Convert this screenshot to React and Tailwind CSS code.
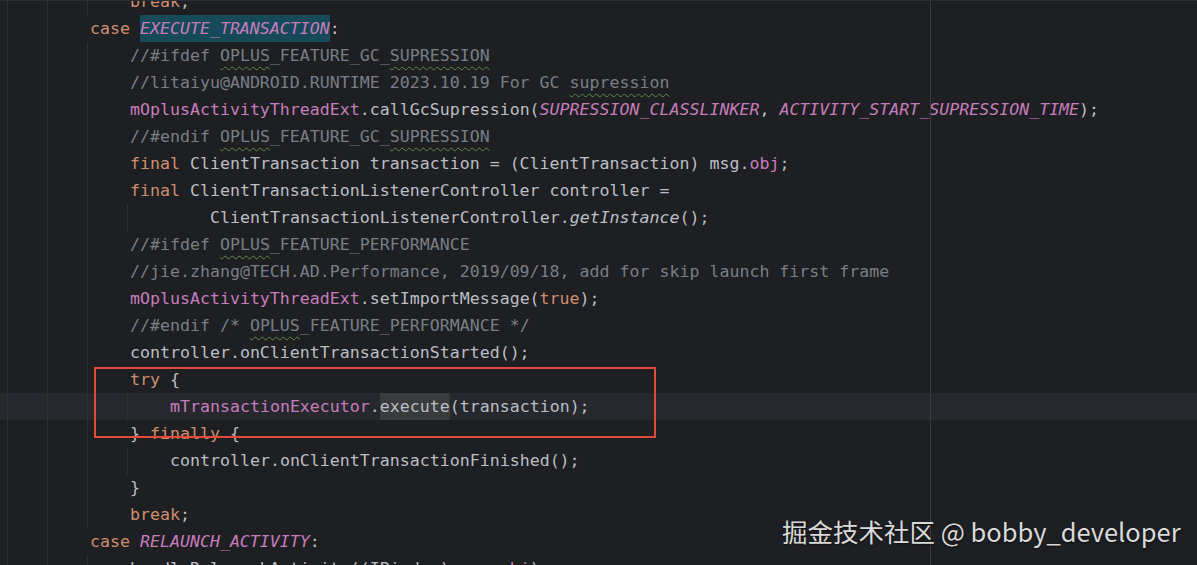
import React from "react";

// token colours (IntelliJ dark)
const K = "text-[#cf8e6d]";
const C = "text-[#7a7e85]";
const P = "text-[#c77dbb]";
const PI = "text-[#c77dbb] italic";
const D = "";
const I = "italic";
const U =
  "text-[#7a7e85] underline decoration-wavy decoration-[#5e8a4a] decoration-1 underline-offset-[5px]";

const lines = [
  { g: 3, t: [["break", K], [";", D]] },
  { g: 2, t: [["case", K], [" ", D], ["EXECUTE_TRANSACTION", PI + " bg-[#16495a]"], [":", D]] },
  { g: 3, t: [["//#ifdef ", C], ["OPLUS", U], ["_FEATURE_GC_", C], ["SUPRESSION", U]] },
  { g: 3, t: [["//litaiyu@ANDROID.RUNTIME 2023.10.19 For GC ", C], ["supression", U]] },
  {
    g: 3,
    t: [
      ["mOplusActivityThreadExt", P],
      [".callGcSupression(", D],
      ["SUPRESSION_CLASSLINKER", PI],
      [", ", D],
      ["ACTIVITY_START_SUPRESSION_TIME", PI],
      [");", D],
    ],
  },
  { g: 3, t: [["//#endif ", C], ["OPLUS", U], ["_FEATURE_GC_", C], ["SUPRESSION", U]] },
  {
    g: 3,
    t: [
      ["final", K],
      [" ClientTransaction transaction = (ClientTransaction) msg.", D],
      ["obj", P],
      [";", D],
    ],
  },
  { g: 3, t: [["final", K], [" ClientTransactionListenerController controller =", D]] },
  {
    g: 4,
    extra: 1,
    t: [["ClientTransactionListenerController.", D], ["getInstance", I], ["();", D]],
  },
  { g: 3, t: [["//#ifdef ", C], ["OPLUS", U], ["_FEATURE_PERFORMANCE", C]] },
  {
    g: 3,
    t: [["//jie.zhang@TECH.AD.Performance, 2019/09/18, add for skip launch first frame", C]],
  },
  {
    g: 3,
    t: [["mOplusActivityThreadExt", P], [".setImportMessage(", D], ["true", K], [");", D]],
  },
  { g: 3, t: [["//#endif /* ", C], ["OPLUS", U], ["_FEATURE_PERFORMANCE */", C]] },
  { g: 3, t: [["controller.onClientTransactionStarted();", D]] },
  { g: 3, t: [["try", K], [" {", D]] },
  {
    g: 4,
    cur: true,
    t: [["mTransactionExecutor", P], [".", D], ["execute", "bg-[#393b3c]"], ["(transaction);", D]],
  },
  { g: 3, t: [["} ", D], ["finally", K], [" {", D]] },
  { g: 4, t: [["controller.onClientTransactionFinished();", D]] },
  { g: 3, t: [["}", D]] },
  { g: 3, t: [["break", K], [";", D]] },
  { g: 2, t: [["case", K], [" ", D], ["RELAUNCH_ACTIVITY", PI], [":", D]] },
  { g: 3, t: [["handleRelaunchActivity((IBinder) msg.", D], ["obj", P], [");", D]] },
];

function CodeLine({ line }) {
  return (
    <div
      className={`flex h-[27px] pl-[7px] whitespace-pre ${
        line.cur ? "bg-[#26282e]" : ""
      }`}
    >
      {Array.from({ length: line.g }).map((_, i) => (
        <span key={i} className="w-[40px] shrink-0 border-l border-[#2f3034]" />
      ))}
      {line.extra && <span className="w-[40px] shrink-0" />}
      <span className="w-[3px] shrink-0" />
      {line.t.map(([text, cls], i) => (
        <span key={i} className={`leading-[27px] ${cls}`}>
          {text}
        </span>
      ))}
    </div>
  );
}

export default function App() {
  return (
    <div className="relative w-[1197px] h-[565px] overflow-hidden bg-[#1e1f22] border-t border-[#2b2d30]">
      {/* code */}
      <div
        className="-mt-[13px] text-[#bcbec4] text-[16.6px]"
        style={{ fontFamily: '"DejaVu Sans Mono", "Liberation Mono", monospace' }}
      >
        {lines.map((line, i) => (
          <CodeLine key={i} line={line} />
        ))}
      </div>

      {/* right margin guide */}
      <div className="absolute top-0 bottom-0 left-[930px] w-px bg-[#393b40]" />

      {/* red annotation box */}
      <div className="absolute left-[94px] top-[366px] w-[562px] h-[71px] border-2 border-[#e04b3a]" />

      {/* watermark */}
      <div
        className="absolute left-[782px] top-[513px] text-[25.5px] leading-[34px] text-[#dadada] [text-shadow:0_1px_2px_rgba(0,0,0,0.6)]"
        style={{ fontFamily: '"Noto Sans CJK SC", "Noto Sans", sans-serif' }}
      >
        掘金技术社区 @ bobby_developer
      </div>
    </div>
  );
}
